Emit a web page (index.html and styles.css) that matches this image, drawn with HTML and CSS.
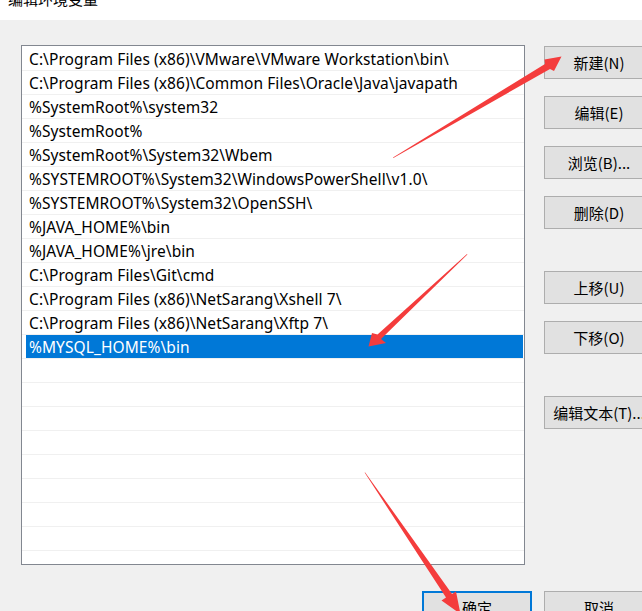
FILE: index.html
```html
<!DOCTYPE html>
<html lang="zh-CN">
<head>
<meta charset="utf-8">
<title>编辑环境变量</title>
<link rel="stylesheet" href="styles.css">
</head>
<body>
<div class="dialog">
  <div class="titlebar"><span class="title">编辑环境变量</span></div>
  <div class="content">
    <div class="main">
      <div class="list">
        <div class="row"><span class="cell">C:\Program Files (x86)\VMware\VMware Workstation\bin\</span></div>
        <div class="row"><span class="cell">C:\Program Files (x86)\Common Files\Oracle\Java\javapath</span></div>
        <div class="row"><span class="cell">%SystemRoot%\system32</span></div>
        <div class="row"><span class="cell">%SystemRoot%</span></div>
        <div class="row"><span class="cell">%SystemRoot%\System32\Wbem</span></div>
        <div class="row"><span class="cell">%SYSTEMROOT%\System32\WindowsPowerShell\v1.0\</span></div>
        <div class="row"><span class="cell">%SYSTEMROOT%\System32\OpenSSH\</span></div>
        <div class="row"><span class="cell">%JAVA_HOME%\bin</span></div>
        <div class="row"><span class="cell">%JAVA_HOME%\jre\bin</span></div>
        <div class="row"><span class="cell">C:\Program Files\Git\cmd</span></div>
        <div class="row"><span class="cell">C:\Program Files (x86)\NetSarang\Xshell 7\</span></div>
        <div class="row"><span class="cell">C:\Program Files (x86)\NetSarang\Xftp 7\</span></div>
        <div class="row"><span class="cell selected">%MYSQL_HOME%\bin</span></div>
        <div class="row"><span class="cell"></span></div>
        <div class="row"><span class="cell"></span></div>
        <div class="row"><span class="cell"></span></div>
        <div class="row"><span class="cell"></span></div>
        <div class="row"><span class="cell"></span></div>
        <div class="row"><span class="cell"></span></div>
        <div class="row"><span class="cell"></span></div>
        <div class="row"><span class="cell"></span></div>
        <div class="row"><span class="cell"></span></div>
        <div class="row"><span class="cell"></span></div>
      </div>
      <div class="side">
        <div class="group">
          <button class="btn">新建(N)</button>
          <button class="btn">编辑(E)</button>
          <button class="btn">浏览(B)...</button>
          <button class="btn">删除(D)</button>
        </div>
        <div class="group">
          <button class="btn">上移(U)</button>
          <button class="btn">下移(O)</button>
        </div>
        <div class="group">
          <button class="btn">编辑文本(T)...</button>
        </div>
      </div>
    </div>
    <div class="footer">
      <button class="btn default">确定</button>
      <button class="btn">取消</button>
    </div>
  </div>
</div>
<svg class="marks" width="642" height="611" viewBox="0 0 642 611" aria-hidden="true">
  <polygon class="arrow" points="393,157.6 545,64 544.5,59.5 561.5,56.5 554,71 550,69 393.4,158"/>
  <polygon class="arrow" points="467,254 377.5,334.5 372,333 368.5,346.5 386,343 381,339 467.4,254.4"/>
  <polygon class="arrow" points="364.6,472.6 446,597.5 441.5,600.5 460.5,614 456,591.5 452,594 365.2,472.4"/>
</svg>
</body>
</html>
```

FILE: styles.css
```css
html, body {
  margin: 0;
  padding: 0;
  background: #f0f0f0;
  overflow: hidden;
}

body {
  width: 642px;
  height: 611px;
  position: relative;
  font-family: "Noto Sans", "Noto Sans CJK SC", sans-serif;
  font-size: 15px;
  color: #000;
}

.dialog {
  width: 700px;
}

.titlebar {
  height: 20px;
  background: #ffffff;
  overflow: hidden;
}

.title {
  display: block;
  padding-left: 8px;
  margin-top: -11px;
  line-height: 20px;
  font-family: "Noto Sans CJK SC", sans-serif;
  font-size: 15px;
  color: #000;
}

.content {
  padding: 25px 0 0 21px;
}

.main {
  display: flex;
  align-items: flex-start;
  gap: 19px;
}

.list {
  box-sizing: border-box;
  width: 504px;
  height: 520px;
  border: 1px solid #828790;
  background: #ffffff;
  padding-top: 1px;
  overflow: hidden;
}

.row {
  height: 23px;
  border-bottom: 1px solid #f0f0f0;
  display: flex;
}

.cell {
  flex: 1;
  margin: 0 1px 0 4px;
  padding: 1px 0 0 3px;
  line-height: 23px;
  height: 22px;
  overflow: hidden;
  white-space: nowrap;
  font-size: 15.5px;
  letter-spacing: 0.08px;
}

.cell.selected {
  background: #0078d7;
  color: #ffffff;
}

.side {
  margin-top: 1px;
  display: flex;
  flex-direction: column;
  gap: 42px;
}

.group {
  display: flex;
  flex-direction: column;
  gap: 17px;
}

.btn {
  box-sizing: border-box;
  width: 110px;
  height: 33px;
  padding: 0 0 1px;
  margin: 0;
  border: 1px solid #adadad;
  background: #e1e1e1;
  font-family: "Noto Sans CJK SC", sans-serif;
  font-size: 15px;
  color: #000;
  text-align: center;
  white-space: nowrap;
  overflow: hidden;
}

.btn.default {
  border: 2px solid #0078d7;
}

.footer {
  margin-top: 26px;
  width: 633px;
  display: flex;
  justify-content: flex-end;
  gap: 12px;
}

.marks {
  position: absolute;
  left: 0;
  top: 0;
  pointer-events: none;
}

.arrow {
  fill: #f43c3c;
}
```
